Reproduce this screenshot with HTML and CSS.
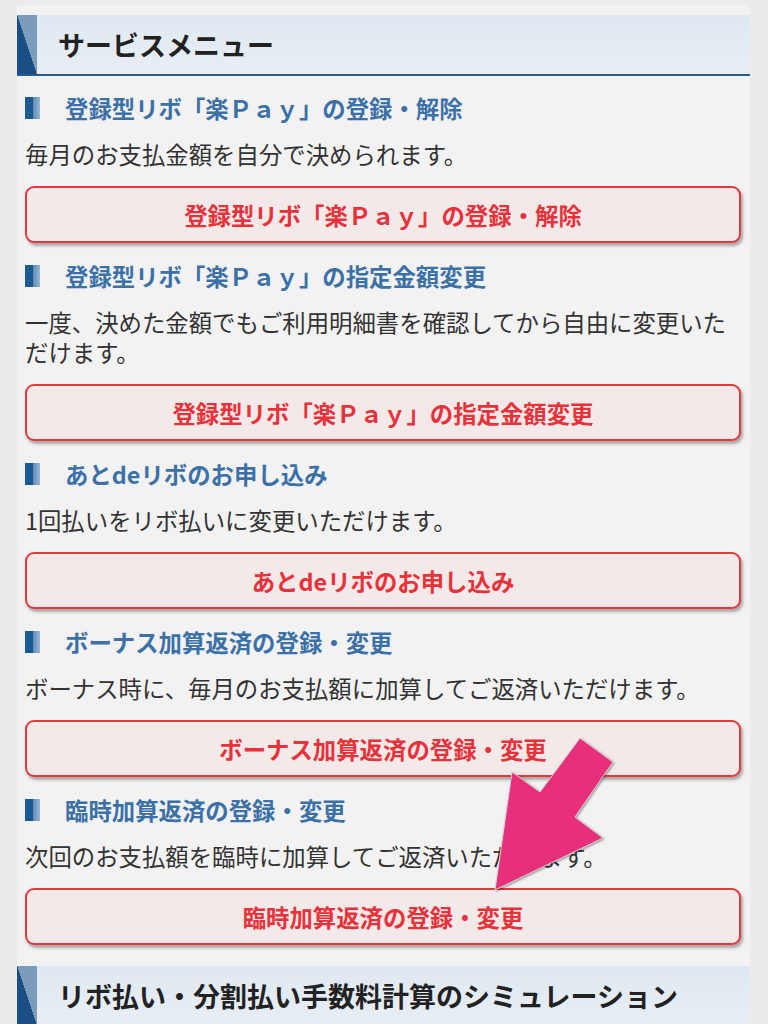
FILE: index.html
```html
<html>
<head>
  <meta charset="utf-8">
  <link rel="stylesheet" href="styles.css">
</head>
<body>
  <div id="page">
    <!-- service menu -->
    <h2 class="box-title"><span class="stripe"></span>サービスメニュー</h2>
    <div id="menu">
      <div class="item">
        <h3 class="item-title"><span class="bar"></span>登録型リボ「楽Ｐａｙ」の登録・解除</h3>
        <p class="item-text">毎月のお支払金額を自分で決められます。</p>
        <a class="item-button" href="#">登録型リボ「楽Ｐａｙ」の登録・解除</a>
      </div>
      <div class="item">
        <h3 class="item-title"><span class="bar"></span>登録型リボ「楽Ｐａｙ」の指定金額変更</h3>
        <p class="item-text">一度、決めた金額でもご利用明細書を確認してから自由に変更いただけます。</p>
        <a class="item-button" href="#">登録型リボ「楽Ｐａｙ」の指定金額変更</a>
      </div>
      <div class="item">
        <h3 class="item-title"><span class="bar"></span>あとdeリボのお申し込み</h3>
        <p class="item-text">1回払いをリボ払いに変更いただけます。</p>
        <a class="item-button" href="#">あとdeリボのお申し込み</a>
      </div>
      <div class="item">
        <h3 class="item-title"><span class="bar"></span>ボーナス加算返済の登録・変更</h3>
        <p class="item-text">ボーナス時に、毎月のお支払額に加算してご返済いただけます。</p>
        <a class="item-button" href="#">ボーナス加算返済の登録・変更</a>
      </div>
      <div class="item">
        <h3 class="item-title"><span class="bar"></span>臨時加算返済の登録・変更</h3>
        <p class="item-text">次回のお支払額を臨時に加算してご返済いただけます。</p>
        <a class="item-button" href="#">臨時加算返済の登録・変更</a>
      </div>
    </div>
    <h2 class="box-title"><span class="stripe"></span>リボ払い・分割払い手数料計算のシミュレーション</h2>

    <!-- pointer arrow over the last button -->
    <svg id="arrow" width="140" height="170" viewBox="480 730 140 170">
      <polygon points="580,738 613,762 575,817 603,838 495,890 512,772 540,792"
               fill="#e8307a" stroke="#d8d8d8" stroke-width="1"/>
    </svg>
  </div>
</body>
</html>
```

FILE: styles.css
```css
* { font-family: "Noto Sans CJK JP", sans-serif; }
body {
   margin: 0;
   background-color: #ebebeb;
}
#page {
   position: relative;
   margin: 5px 18px 0px 17px;
   padding-top: 10px;
   background-color: #f2f2f2;
   height: 1019px;
   overflow: hidden;
}
.box-title {
   display: flex;
   align-items: center;
   margin: 0px;
   height: 59px;
   border-bottom: 2px solid #2a5b8e;
   background: linear-gradient(#dfe8f1, #e8eef4);
   font-size: 27px;
   font-weight: bold;
   color: #222222;
}
.box-title .stripe {
   align-self: stretch;
   width: 20px;
   margin-right: 21px;
   background: linear-gradient(to top right, #1b4f83 50%, #7b9cba 50%);
}
#menu {
   padding: 17px 9px 21px 8px;
   display: flex;
   flex-direction: column;
   gap: 18px;
}
.item { display: flex; flex-direction: column; }
.item-title {
   display: flex;
   align-items: center;
   margin: 0px 0px 16px 0px;
   height: 30px;
   font-size: 23.4px;
   font-weight: bold;
   color: #3c71a8;
}
.item-title .bar {
   width: 15px;
   height: 22px;
   margin-right: 25px;
   background: linear-gradient(to right, #1c5a94 55%, #5f8bb8 55%, #9ab7d4);
}
.item-text {
   margin: 0px 0px 17px 0px;
   font-size: 23.4px;
   line-height: 30px;
   color: #333333;
}
.item-button {
   display: flex;
   align-items: center;
   justify-content: center;
   height: 53px;
   border: 2px solid #e4383d;
   border-radius: 9px;
   background-color: #f2e9e8;
   box-shadow: 2px 3px 3px rgba(0, 0, 0, 0.3);
   font-size: 23.4px;
   font-weight: bold;
   color: #e8323b;
   text-decoration: none;
}
#arrow {
   position: absolute;
   left: 463px;
   top: 725px;
   filter: drop-shadow(1px 1px 1px rgba(0, 0, 0, 0.4));
}
```
